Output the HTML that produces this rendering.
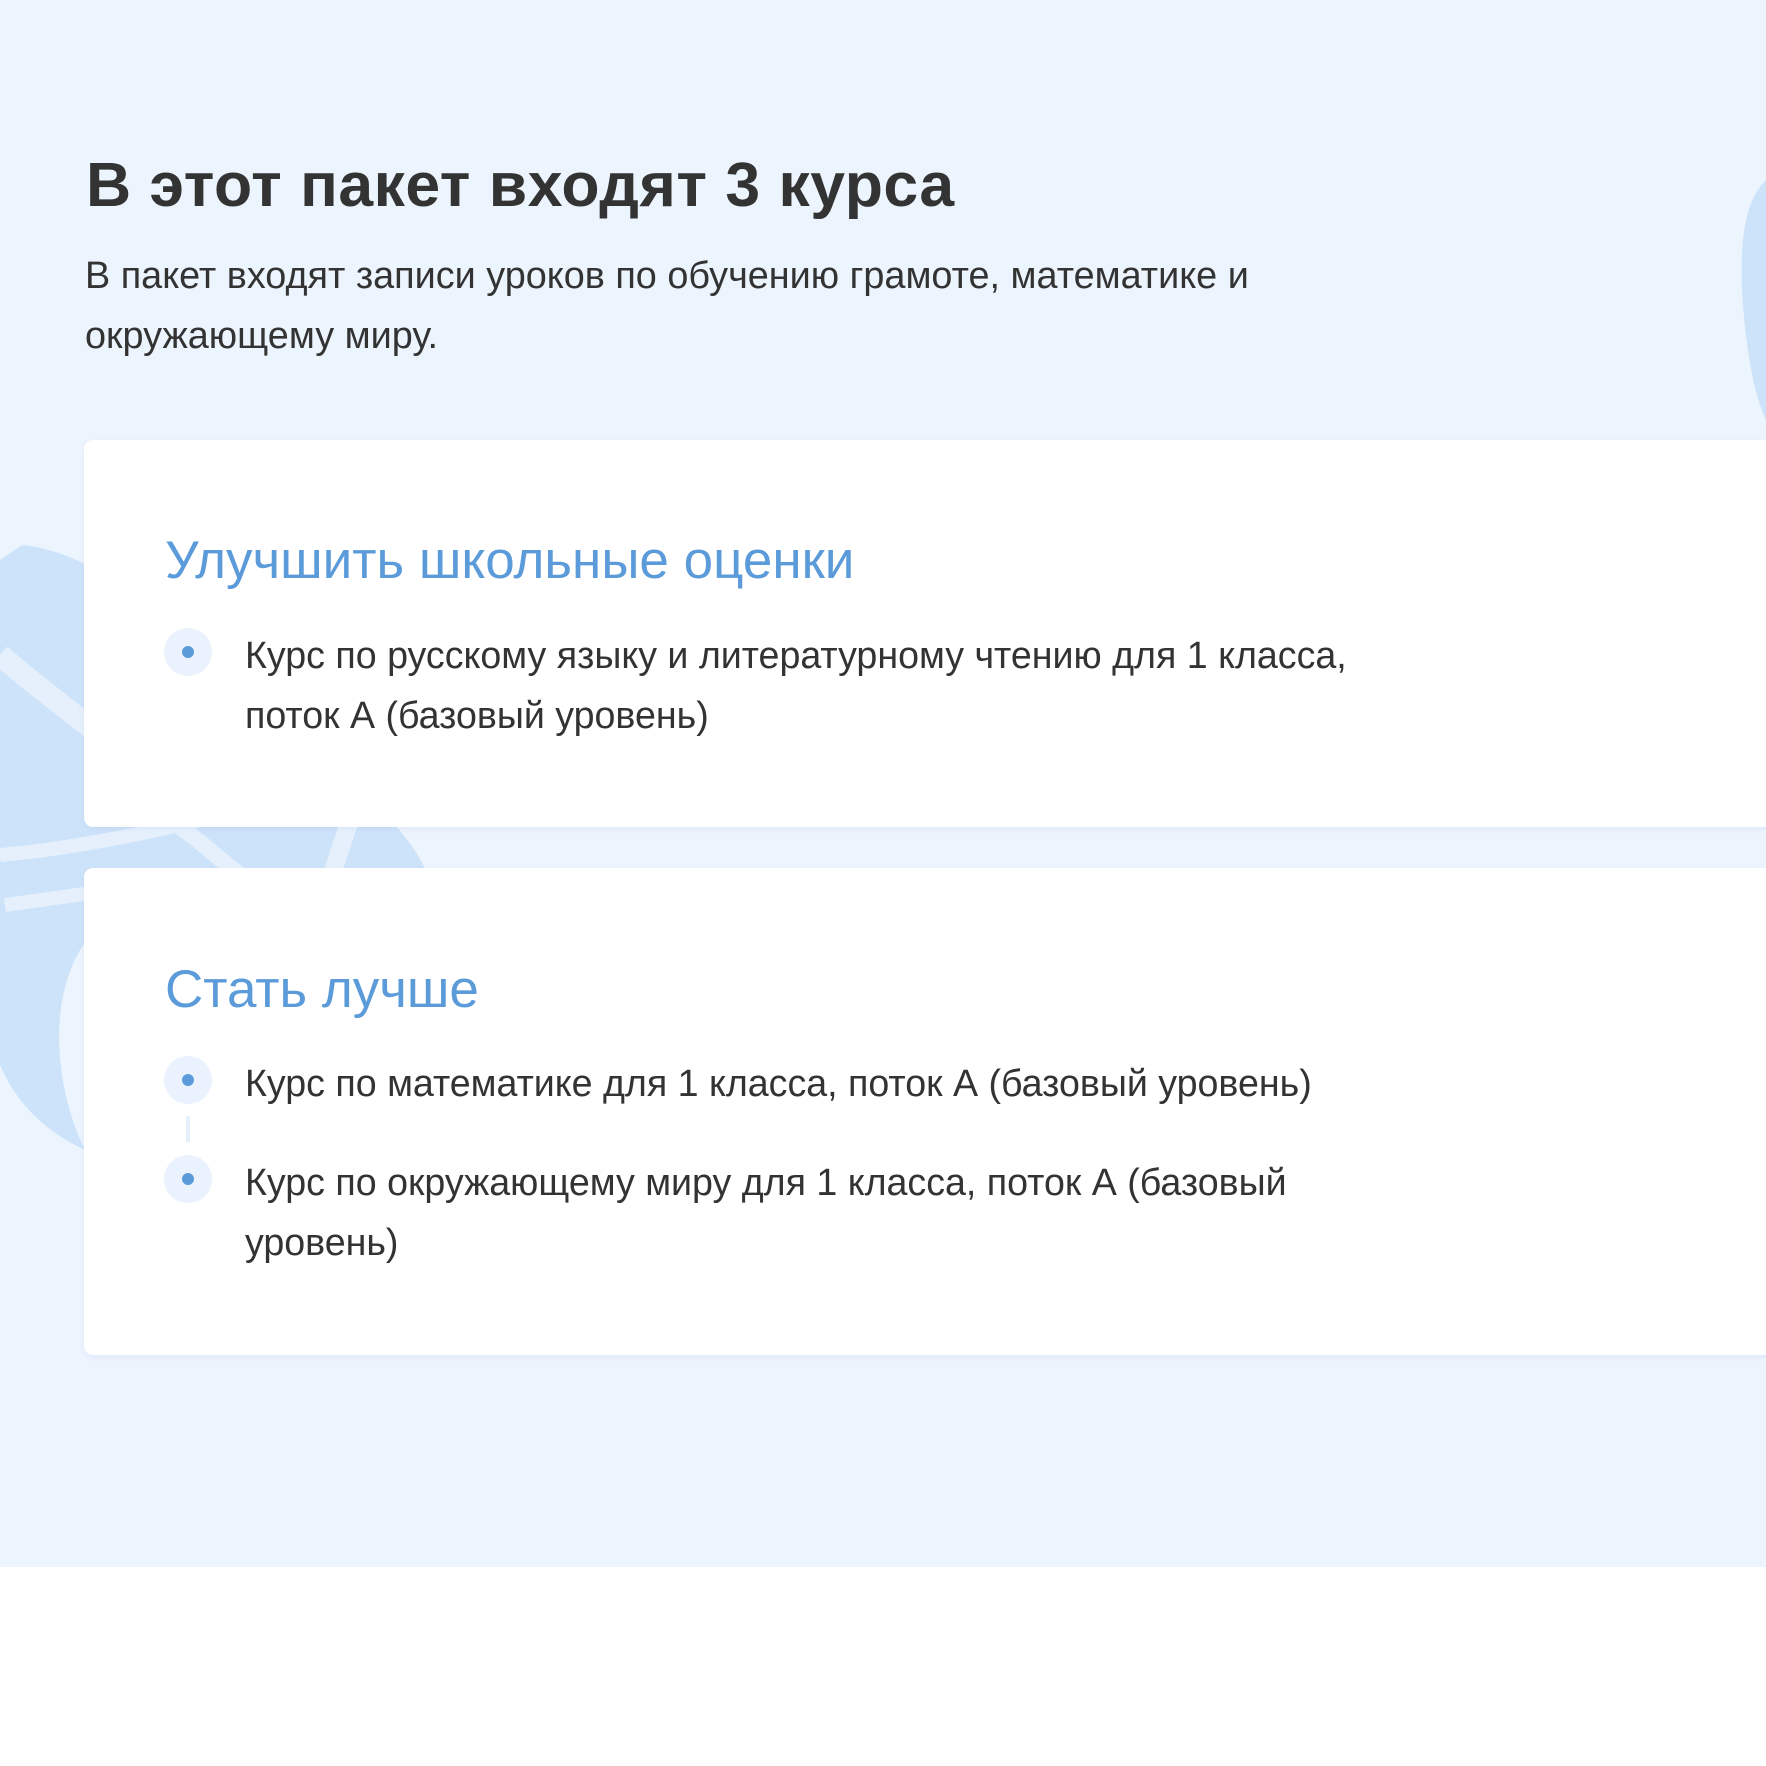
<!DOCTYPE html>
<html><head><meta charset="utf-8"><style>
html,body{margin:0;padding:0}
body{width:1766px;height:1766px;background:#fff;position:relative;overflow:hidden;font-family:"Liberation Sans",sans-serif;color:#333}
.bg{position:absolute;left:0;top:0;width:1766px;height:1567px;background:#ECF4FE}
svg.deco{position:absolute;left:0;top:0}
h1{position:absolute;left:86px;top:149px;margin:0;font-size:62.5px;font-weight:bold;color:#333;letter-spacing:0.5px;white-space:nowrap}
.sub{position:absolute;left:85px;top:246px;font-size:37.8px;line-height:60px;color:#333;white-space:nowrap}
.card{position:absolute;left:84px;width:1700px;background:#fff;border-radius:9px;box-shadow:0 2px 6px rgba(120,160,210,0.12)}
.card h2{position:absolute;left:81px;margin:0;font-size:53px;font-weight:normal;color:#5B9BDA;white-space:nowrap}
.item{position:absolute;left:161px;font-size:37.6px;line-height:60px;color:#333;white-space:nowrap}
.dot{position:absolute;left:80px;width:48px;height:48px;border-radius:50%;background:#EAF3FD}
.dot:after{content:"";position:absolute;left:18px;top:18px;width:12px;height:12px;border-radius:50%;background:#5B9BDA}
.line{position:absolute;left:102px;width:4px;height:26px;background:#E6F0FB}
</style></head><body>
<div class="bg"></div>
<svg class="deco" width="1766" height="1567" viewBox="0 0 1766 1567">
  <path d="M1766 180 C1745 200 1740 240 1742 290 C1745 340 1752 390 1766 420 Z" fill="#CDE3FA"/>
  <path d="M22 545 C80 550 160 600 230 680 C300 760 400 800 430 880 L330 880 C260 900 180 920 90 935 C40 1000 60 1100 85 1150 C20 1120 -20 1060 -10 980 L0 560 Z" fill="#CDE3FA"/>
  <path d="M0 655 C40 690 90 725 130 760" stroke="#E6F0FC" stroke-width="22" fill="none"/>
  <path d="M0 855 C60 850 140 835 200 820" stroke="#E6F0FC" stroke-width="14" fill="none"/>
  <path d="M5 905 C80 895 150 885 200 878" stroke="#E6F0FC" stroke-width="14" fill="none"/>
  <path d="M170 820 C200 840 220 860 240 875" stroke="#E6F0FC" stroke-width="16" fill="none"/>
  <path d="M350 820 L330 880" stroke="#E6F0FC" stroke-width="18" fill="none"/>
</svg>
<h1>В этот пакет входят 3 курса</h1>
<div class="sub">В пакет входят записи уроков по обучению грамоте, математике и<br>окружающему миру.</div>
<div class="card" style="top:440px;height:387px">
  <h2 style="top:90px">Улучшить школьные оценки</h2>
  <div class="dot" style="top:188px"></div>
  <div class="item" style="top:185px">Курс по русскому языку и литературному чтению для 1 класса,<br>поток А (базовый уровень)</div>
</div>
<div class="card" style="top:868px;height:487px">
  <h2 style="top:91px">Стать лучше</h2>
  <div class="dot" style="top:188px"></div>
  <div class="item" style="top:185px">Курс по математике для 1 класса, поток А (базовый уровень)</div>
  <div class="line" style="top:248px"></div>
  <div class="dot" style="top:287px"></div>
  <div class="item" style="top:284px">Курс по окружающему миру для 1 класса, поток А (базовый<br>уровень)</div>
</div>
</body></html>
